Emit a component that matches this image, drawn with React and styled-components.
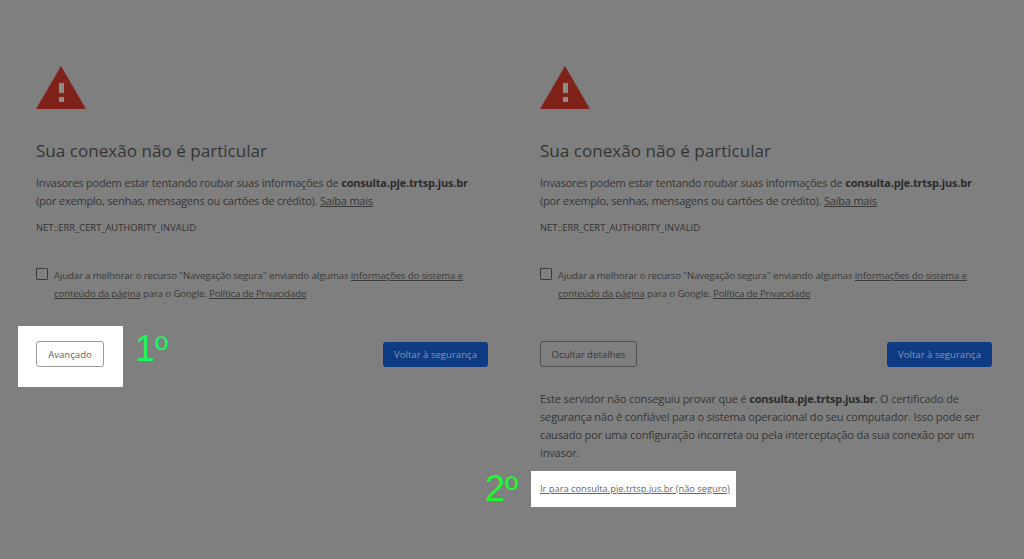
import React from "react";
import styled, { createGlobalStyle } from "styled-components";

const GlobalStyle = createGlobalStyle`
  html, body {
    margin: 0;
    padding: 0;
    background: #7f7f7f;
  }
`;

const Page = styled.div`
  width: 1024px;
  height: 559px;
  overflow: hidden;
  background: #7f7f7f;
  display: grid;
  grid-template-columns: 452px 452px;
  column-gap: 52px;
  padding: 66px 0 0 36px;
  box-sizing: border-box;
  font-family: "Open Sans", "Noto Sans", "Liberation Sans", sans-serif;
  color: #303030;
`;

const Panel = styled.section`
  display: flex;
  flex-direction: column;
`;

const Icon = styled.svg`
  display: block;
  width: 50px;
  height: 43px;
`;

const Title = styled.h1`
  margin: 31px 0 0;
  font-size: 17.1px;
  line-height: 22px;
  font-weight: 400;
  color: #353535;
`;

const Message = styled.p`
  margin: 12px 0 0;
  font-size: 11px;
  line-height: 17.5px;
  color: #363636;
  letter-spacing: -0.2px;
  white-space: nowrap;

  b {
    font-weight: 700;
    color: #2b2b2b;
    letter-spacing: -0.2px;
  }
`;

const Underlined = styled.a`
  color: inherit;
  text-decoration: underline;
`;

const ErrorCode = styled.div`
  margin-top: 12px;
  font-size: 9.4px;
  line-height: 14px;
  color: #333;
`;

const OptIn = styled.label`
  margin-top: 32px;
  display: flex;
  gap: 6px;
  font-size: 9.6px;
  line-height: 18px;
  letter-spacing: -0.12px;
  color: #3a3a3a;
`;

const CheckBox = styled.span`
  flex: none;
  width: 10px;
  height: 10px;
  margin-top: 1px;
  border: 1px solid #3d3d3d;
  border-radius: 1px;
`;

const Actions = styled.div`
  margin-top: 38px;
  display: flex;
  justify-content: space-between;
  align-items: center;
`;

const Highlight = styled.div`
  position: relative;
  margin: -15px 0 -20px -18px;
  padding: 15px 19px 20px 18px;
  background: #fff;
`;

const Step = styled.span`
  position: absolute;
  left: ${(p) => p.$left}px;
  top: ${(p) => p.$top}px;
  font-family: "Liberation Sans", Arial, sans-serif;
  font-size: 36px;
  line-height: 40px;
  color: ${(p) => p.$color};
  white-space: nowrap;
`;

const OutlineButton = styled.button`
  display: block;
  box-sizing: border-box;
  height: 26px;
  width: ${(p) => p.$width}px;
  padding: 0;
  background: transparent;
  border: 1px solid ${(p) => (p.$light ? "#9a9a9a" : "#505050")};
  border-radius: 3px;
  font: inherit;
  font-size: 9.6px;
  color: ${(p) => (p.$light ? "#5f5f5f" : "#383838")};
`;

const PrimaryButton = styled.button`
  box-sizing: border-box;
  height: 25px;
  width: 105px;
  padding: 0;
  background: #0d3b84;
  border: 0;
  border-radius: 3px;
  font: inherit;
  font-size: 9.6px;
  color: #8593ad;
`;

const Details = styled.p`
  margin: 23px 0 0;
  font-size: 11px;
  line-height: 18px;
  letter-spacing: -0.14px;
  color: #363636;
  white-space: nowrap;

  b {
    font-weight: 700;
    color: #2b2b2b;
    letter-spacing: -0.25px;
  }
`;

const LinkBox = styled.div`
  position: relative;
  align-self: flex-start;
  margin: 9px 0 0 -9px;
  padding: 0 6px 2px 9px;
  box-sizing: border-box;
  height: 36px;
  display: flex;
  align-items: center;
  background: #fff;
  font-size: 9.3px;
  color: #666;
`;

const WarningIcon = () => (
  <Icon viewBox="0 0 50 43">
    <path d="M25 0 L50 43 L0 43 Z" fill="#7f221a" />
    <rect x="23" y="17" width="5" height="10" fill="#8d8d8d" />
    <rect x="23" y="31" width="5" height="5" fill="#8d8d8d" />
  </Icon>
);

const Warning = ({ children }) => (
  <Panel>
    <WarningIcon />
    <Title>Sua conexão não é particular</Title>
    <Message>
      Invasores podem estar tentando roubar suas informações de{" "}
      <b>consulta.pje.trtsp.jus.br</b>
      <br />
      (por exemplo, senhas, mensagens ou cartões de crédito).{" "}
      <Underlined>Saiba mais</Underlined>
    </Message>
    <ErrorCode>NET::ERR_CERT_AUTHORITY_INVALID</ErrorCode>
    <OptIn>
      <CheckBox />
      <span>
        Ajudar a melhorar o recurso "Navegação segura" enviando algumas{" "}
        <Underlined>informações do sistema e</Underlined>
        <br />
        <Underlined>conteúdo da página</Underlined> para o Google.{" "}
        <Underlined>Política de Privacidade</Underlined>
      </span>
    </OptIn>
    {children}
  </Panel>
);

export default function App() {
  return (
    <>
      <GlobalStyle />
      <Page>
        <Warning>
          <Actions>
            <Highlight>
              <OutlineButton $light $width={68}>
                Avançado
              </OutlineButton>
              <Step $left={117} $top={3} $color="#19f55c">
                1º
              </Step>
            </Highlight>
            <PrimaryButton>Voltar à segurança</PrimaryButton>
          </Actions>
        </Warning>
        <Warning>
          <Actions>
            <OutlineButton $width={97}>Ocultar detalhes</OutlineButton>
            <PrimaryButton>Voltar à segurança</PrimaryButton>
          </Actions>
          <Details>
            Este servidor não conseguiu provar que é{" "}
            <b>consulta.pje.trtsp.jus.br</b>. O certificado de
            <br />
            segurança não é confiável para o sistema operacional do seu
            computador. Isso pode ser
            <br />
            causado por uma configuração incorreta ou pela interceptação da sua
            conexão por um
            <br />
            invasor.
          </Details>
          <LinkBox>
            <Underlined>Ir para consulta.pje.trtsp.jus.br (não seguro)</Underlined>
            <Step $left={-46} $top={-2} $color="#1dfb2a">
              2º
            </Step>
          </LinkBox>
        </Warning>
      </Page>
    </>
  );
}
